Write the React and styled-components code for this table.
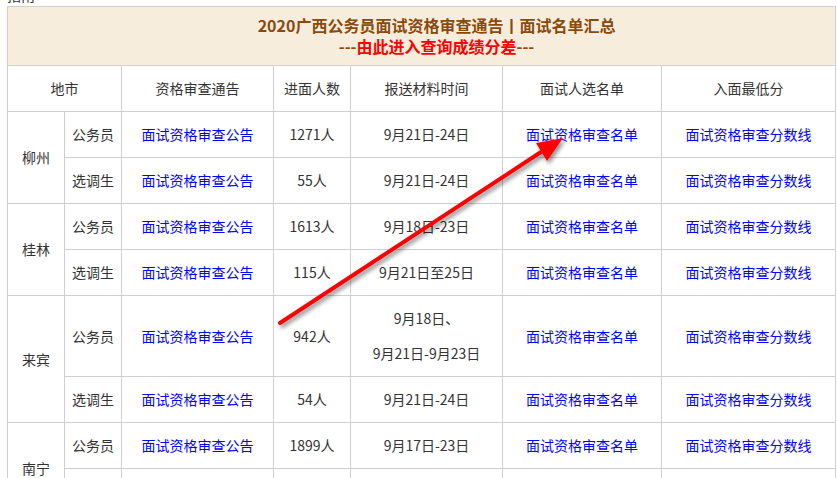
import React from "react";
import styled, { createGlobalStyle } from "styled-components";

const GlobalStyle = createGlobalStyle`
  body {
    margin: 0;
    background: #fff;
    font-family: "Noto Sans CJK SC", "Noto Sans", sans-serif;
    color: #333;
    overflow: hidden;
  }
`;

const Page = styled.div`
  position: relative;
  padding: 0 0 0 7px;
  width: 837px;
  height: 478px;
  box-sizing: border-box;
  overflow: hidden;
`;

const Clipped = styled.p`
  margin: -13px 0 0;
  height: 19px;
  font-size: 14px;
  line-height: 16px;
  color: #333;
`;

const Table = styled.table`
  width: 828px;
  border-collapse: collapse;
  table-layout: fixed;
  font-size: 14px;
`;

const Banner = styled.th`
  height: 58px;
  padding: 0 0 0 30px;
  background: #f6eddc;
  border: 1px solid #cfcfcf;
  text-align: center;
  font-weight: bold;
  font-size: 16px;
  line-height: 21px;
`;

const Title = styled.div`
  color: #8a4a0c;
`;

const Sub = styled.div`
  color: #8a4a0c;
  span {
    color: #ff0000;
  }
`;

const Head = styled.th`
  height: 35px;
  padding: 5px 0;
  border: 1px solid #cfcfcf;
  font-weight: normal;
  color: #333;
  text-align: center;
  line-height: 35px;
`;

const Cell = styled.td`
  padding: 5px 0;
  border: 1px solid #cfcfcf;
  text-align: center;
  line-height: 35px;
  color: ${({ $link }) => ($link ? "#0000ff" : "#333")};
  vertical-align: middle;
`;

const Arrow = styled.svg`
  position: absolute;
  left: 0;
  top: 0;
  pointer-events: none;
`;

const rows = [
  { city: "柳州", span: 2, type: "公务员", num: "1271人", time: ["9月21日-24日"] },
  { type: "选调生", num: "55人", time: ["9月21日-24日"] },
  { city: "桂林", span: 2, type: "公务员", num: "1613人", time: ["9月18日-23日"] },
  { type: "选调生", num: "115人", time: ["9月21日至25日"] },
  { city: "来宾", span: 2, type: "公务员", num: "942人", time: ["9月18日、", "9月21日-9月23日"] },
  { type: "选调生", num: "54人", time: ["9月21日-24日"] },
  { city: "南宁", span: 2, type: "公务员", num: "1899人", time: ["9月17日-23日"] },
  { type: "选调生", num: "", time: [""] },
];

export default function App() {
  return (
    <Page>
      <GlobalStyle />
      <Clipped>指南</Clipped>
      <Table>
        <colgroup>
          <col style={{ width: 57 }} />
          <col style={{ width: 57 }} />
          <col style={{ width: 152 }} />
          <col style={{ width: 77 }} />
          <col style={{ width: 152 }} />
          <col style={{ width: 159 }} />
          <col style={{ width: 174 }} />
        </colgroup>
        <thead>
          <tr>
            <Banner colSpan={7}>
              <Title>2020广西公务员面试资格审查通告丨面试名单汇总</Title>
              <Sub>
                ---<span>由此进入查询成绩分差</span>---
              </Sub>
            </Banner>
          </tr>
          <tr>
            <Head colSpan={2}>地市</Head>
            <Head>资格审查通告</Head>
            <Head>进面人数</Head>
            <Head>报送材料时间</Head>
            <Head>面试人选名单</Head>
            <Head>入面最低分</Head>
          </tr>
        </thead>
        <tbody>
          {rows.map((r, i) => (
            <tr key={i}>
              {r.city && <Cell rowSpan={r.span}>{r.city}</Cell>}
              <Cell>{r.type}</Cell>
              <Cell $link>面试资格审查公告</Cell>
              <Cell>{r.num}</Cell>
              <Cell>
                {r.time.map((t, j) => (
                  <div key={j}>{t}</div>
                ))}
              </Cell>
              <Cell $link>面试资格审查名单</Cell>
              <Cell $link>面试资格审查分数线</Cell>
            </tr>
          ))}
        </tbody>
      </Table>
      <Arrow width="837" height="478" viewBox="0 0 837 478">
        <defs>
          <filter id="sh" x="-20%" y="-20%" width="140%" height="140%">
            <feDropShadow dx="2" dy="3" stdDeviation="2" floodColor="#000" floodOpacity="0.45" />
          </filter>
        </defs>
        <g filter="url(#sh)">
          <line x1="280" y1="323" x2="541" y2="152" stroke="#f00" strokeWidth="4" strokeLinecap="round" />
          <polygon points="563,138 536,143 547,161" fill="#f00" />
        </g>
      </Arrow>
    </Page>
  );
}
